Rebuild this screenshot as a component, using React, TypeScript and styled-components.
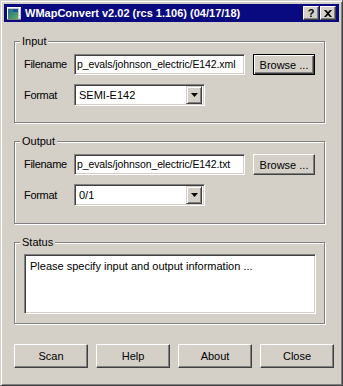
import styled, { createGlobalStyle } from "styled-components";

const GlobalStyle = createGlobalStyle`
  html, body {
    margin: 0;
    padding: 0;
    background: #d4d0c8;
  }
  body {
    font-family: "Liberation Sans", Arial, sans-serif;
    font-size: 11px;
    color: #000;
  }
`;

const Window = styled.div`
  width: 343px;
  height: 386px;
  box-sizing: border-box;
  background: #d4d0c8;
  border: 1px solid;
  border-color: #d4d0c8 #404040 #404040 #d4d0c8;
  box-shadow: inset 1px 1px #fff, inset -1px -1px #808080;
  padding: 3px;
  display: flex;
  flex-direction: column;
`;

const TitleBar = styled.div`
  height: 18px;
  background: #0a0a80;
  display: flex;
  align-items: center;
  padding: 0 3px 0 2px;
  gap: 3px;
`;

const TitleText = styled.div`
  flex: 1;
  color: #fff;
  font-weight: bold;
  font-size: 11px;
  white-space: nowrap;
`;

const CaptionButtons = styled.div`
  display: flex;
  gap: 1px;
`;

const CaptionButton = styled.div`
  width: 16px;
  height: 14px;
  box-sizing: border-box;
  background: #d4d0c8;
  border: 1px solid;
  border-color: #fff #404040 #404040 #fff;
  box-shadow: inset -1px -1px #808080;
  display: flex;
  align-items: center;
  justify-content: center;
  font-weight: bold;
  font-size: 11px;
  line-height: 1;
`;

const Client = styled.div`
  flex: 1;
  display: flex;
  flex-direction: column;
  padding: 19px 5px 0 10px;
`;

const Group = styled.div<{ $height?: number; $gap?: number }>`
  position: relative;
  width: 311px;
  height: ${(p) => p.$height ?? 82}px;
  margin-bottom: ${(p) => p.$gap ?? 18}px;
  box-sizing: border-box;
  border: 1px solid #808080;
  box-shadow: inset 1px 1px #fff, 1px 1px #fff;
  padding: 11px 8px 0 9px;
  display: flex;
  flex-direction: column;
  gap: 9px;
`;

const Caption = styled.span`
  position: absolute;
  top: -7px;
  left: 5px;
  padding: 0 2px;
  background: #d4d0c8;
  line-height: 13px;
`;

const Row = styled.div`
  display: flex;
  align-items: center;
`;

const Label = styled.div`
  width: 50px;
  letter-spacing: -0.3px;
`;

const Sunken = styled.div`
  box-sizing: border-box;
  background: #fff;
  border: 1px solid;
  border-color: #808080 #fff #fff #808080;
  box-shadow: inset 1px 1px #404040, inset -1px -1px #d4d0c8;
`;

const TextField = styled(Sunken)`
  width: 171px;
  height: 21px;
  padding: 0 3px 0 2px;
  display: flex;
  align-items: center;
  overflow: hidden;
  white-space: nowrap;
  font-size: 10.5px;
  letter-spacing: -0.1px;
`;

const Combo = styled(Sunken)`
  width: 131px;
  height: 22px;
  padding: 2px 2px 2px 4px;
  display: flex;
  align-items: center;
`;

const ComboValue = styled.div`
  flex: 1;
`;

const ComboArrow = styled.div`
  width: 16px;
  height: 18px;
  box-sizing: border-box;
  background: #d4d0c8;
  border: 1px solid;
  border-color: #d4d0c8 #404040 #404040 #d4d0c8;
  box-shadow: inset 1px 1px #fff, inset -1px -1px #808080;
  display: flex;
  align-items: center;
  justify-content: center;
`;

const Button = styled.div<{ $default?: boolean }>`
  box-sizing: border-box;
  height: 24px;
  background: #d4d0c8;
  border: 1px solid;
  border-color: #fff #404040 #404040 #fff;
  box-shadow: inset -1px -1px #808080;
  display: flex;
  align-items: center;
  justify-content: center;
  white-space: nowrap;
  ${(p) =>
    p.$default &&
    `
    border-color: #000;
    box-shadow: inset 1px 1px #fff, inset -1px -1px #404040, inset -2px -2px #808080;
  `}
`;

const BrowseButton = styled(Button)`
  width: 62px;
  height: 21px;
  margin-left: 8px;
  margin-top: 1px;
`;

const StatusBox = styled(Sunken)`
  width: 292px;
  height: 60px;
  padding: 5px 5px;
`;

const ButtonRow = styled.div`
  display: grid;
  grid-template-columns: repeat(4, 1fr);
  gap: 8px;
  margin-top: 1px;
`;

function AppIcon() {
  return (
    <svg width="16" height="16" viewBox="0 0 16 16">
      <defs>
        <linearGradient id="ig" x1="0" y1="0" x2="1" y2="1">
          <stop offset="0" stopColor="#1f6a8a" />
          <stop offset="1" stopColor="#5fb060" />
        </linearGradient>
      </defs>
      <rect x="1" y="2" width="14" height="13" fill="#c8c8c8" />
      <rect x="1" y="2" width="14" height="1" fill="#fff" />
      <rect x="1" y="2" width="1" height="13" fill="#fff" />
      <rect x="2" y="4" width="10" height="10" fill="url(#ig)" />
      <rect x="7" y="4" width="5" height="3" fill="#2050a0" />
      <rect x="13" y="3" width="1" height="7" fill="#fff" />
      <rect x="13" y="11" width="1" height="2" fill="#fff" />
      <rect x="1" y="14" width="14" height="1" fill="#808080" />
    </svg>
  );
}

function CloseGlyph() {
  return (
    <svg width="8" height="7" viewBox="0 0 8 7">
      <path d="M0 0h2l2 2 2-2h2L5 3.5 8 7H6L4 5 2 7H0l3-3.5z" fill="#000" />
    </svg>
  );
}

function DownArrow() {
  return (
    <svg width="7" height="4" viewBox="0 0 7 4">
      <path d="M0 0h7L3.5 4z" fill="#000" />
    </svg>
  );
}

export default function App() {
  return (
    <>
      <GlobalStyle />
      <Window>
        <TitleBar>
          <AppIcon />
          <TitleText>WMapConvert v2.02 (rcs 1.106) (04/17/18)</TitleText>
          <CaptionButtons>
            <CaptionButton>?</CaptionButton>
            <CaptionButton>
              <CloseGlyph />
            </CaptionButton>
          </CaptionButtons>
        </TitleBar>
        <Client>
          <Group>
            <Caption>Input</Caption>
            <Row>
              <Label>Filename</Label>
              <TextField>p_evals/johnson_electric/E142.xml</TextField>
              <BrowseButton $default>Browse ...</BrowseButton>
            </Row>
            <Row>
              <Label>Format</Label>
              <Combo>
                <ComboValue>SEMI-E142</ComboValue>
                <ComboArrow>
                  <DownArrow />
                </ComboArrow>
              </Combo>
            </Row>
          </Group>
          <Group $height={83}>
            <Caption>Output</Caption>
            <Row>
              <Label>Filename</Label>
              <TextField>p_evals/johnson_electric/E142.txt</TextField>
              <BrowseButton>Browse ...</BrowseButton>
            </Row>
            <Row>
              <Label>Format</Label>
              <Combo>
                <ComboValue>0/1</ComboValue>
                <ComboArrow>
                  <DownArrow />
                </ComboArrow>
              </Combo>
            </Row>
          </Group>
          <Group $gap={19}>
            <Caption>Status</Caption>
            <StatusBox>Please specify input and output information ...</StatusBox>
          </Group>
          <ButtonRow>
            <Button>Scan</Button>
            <Button>Help</Button>
            <Button>About</Button>
            <Button>Close</Button>
          </ButtonRow>
        </Client>
      </Window>
    </>
  );
}
